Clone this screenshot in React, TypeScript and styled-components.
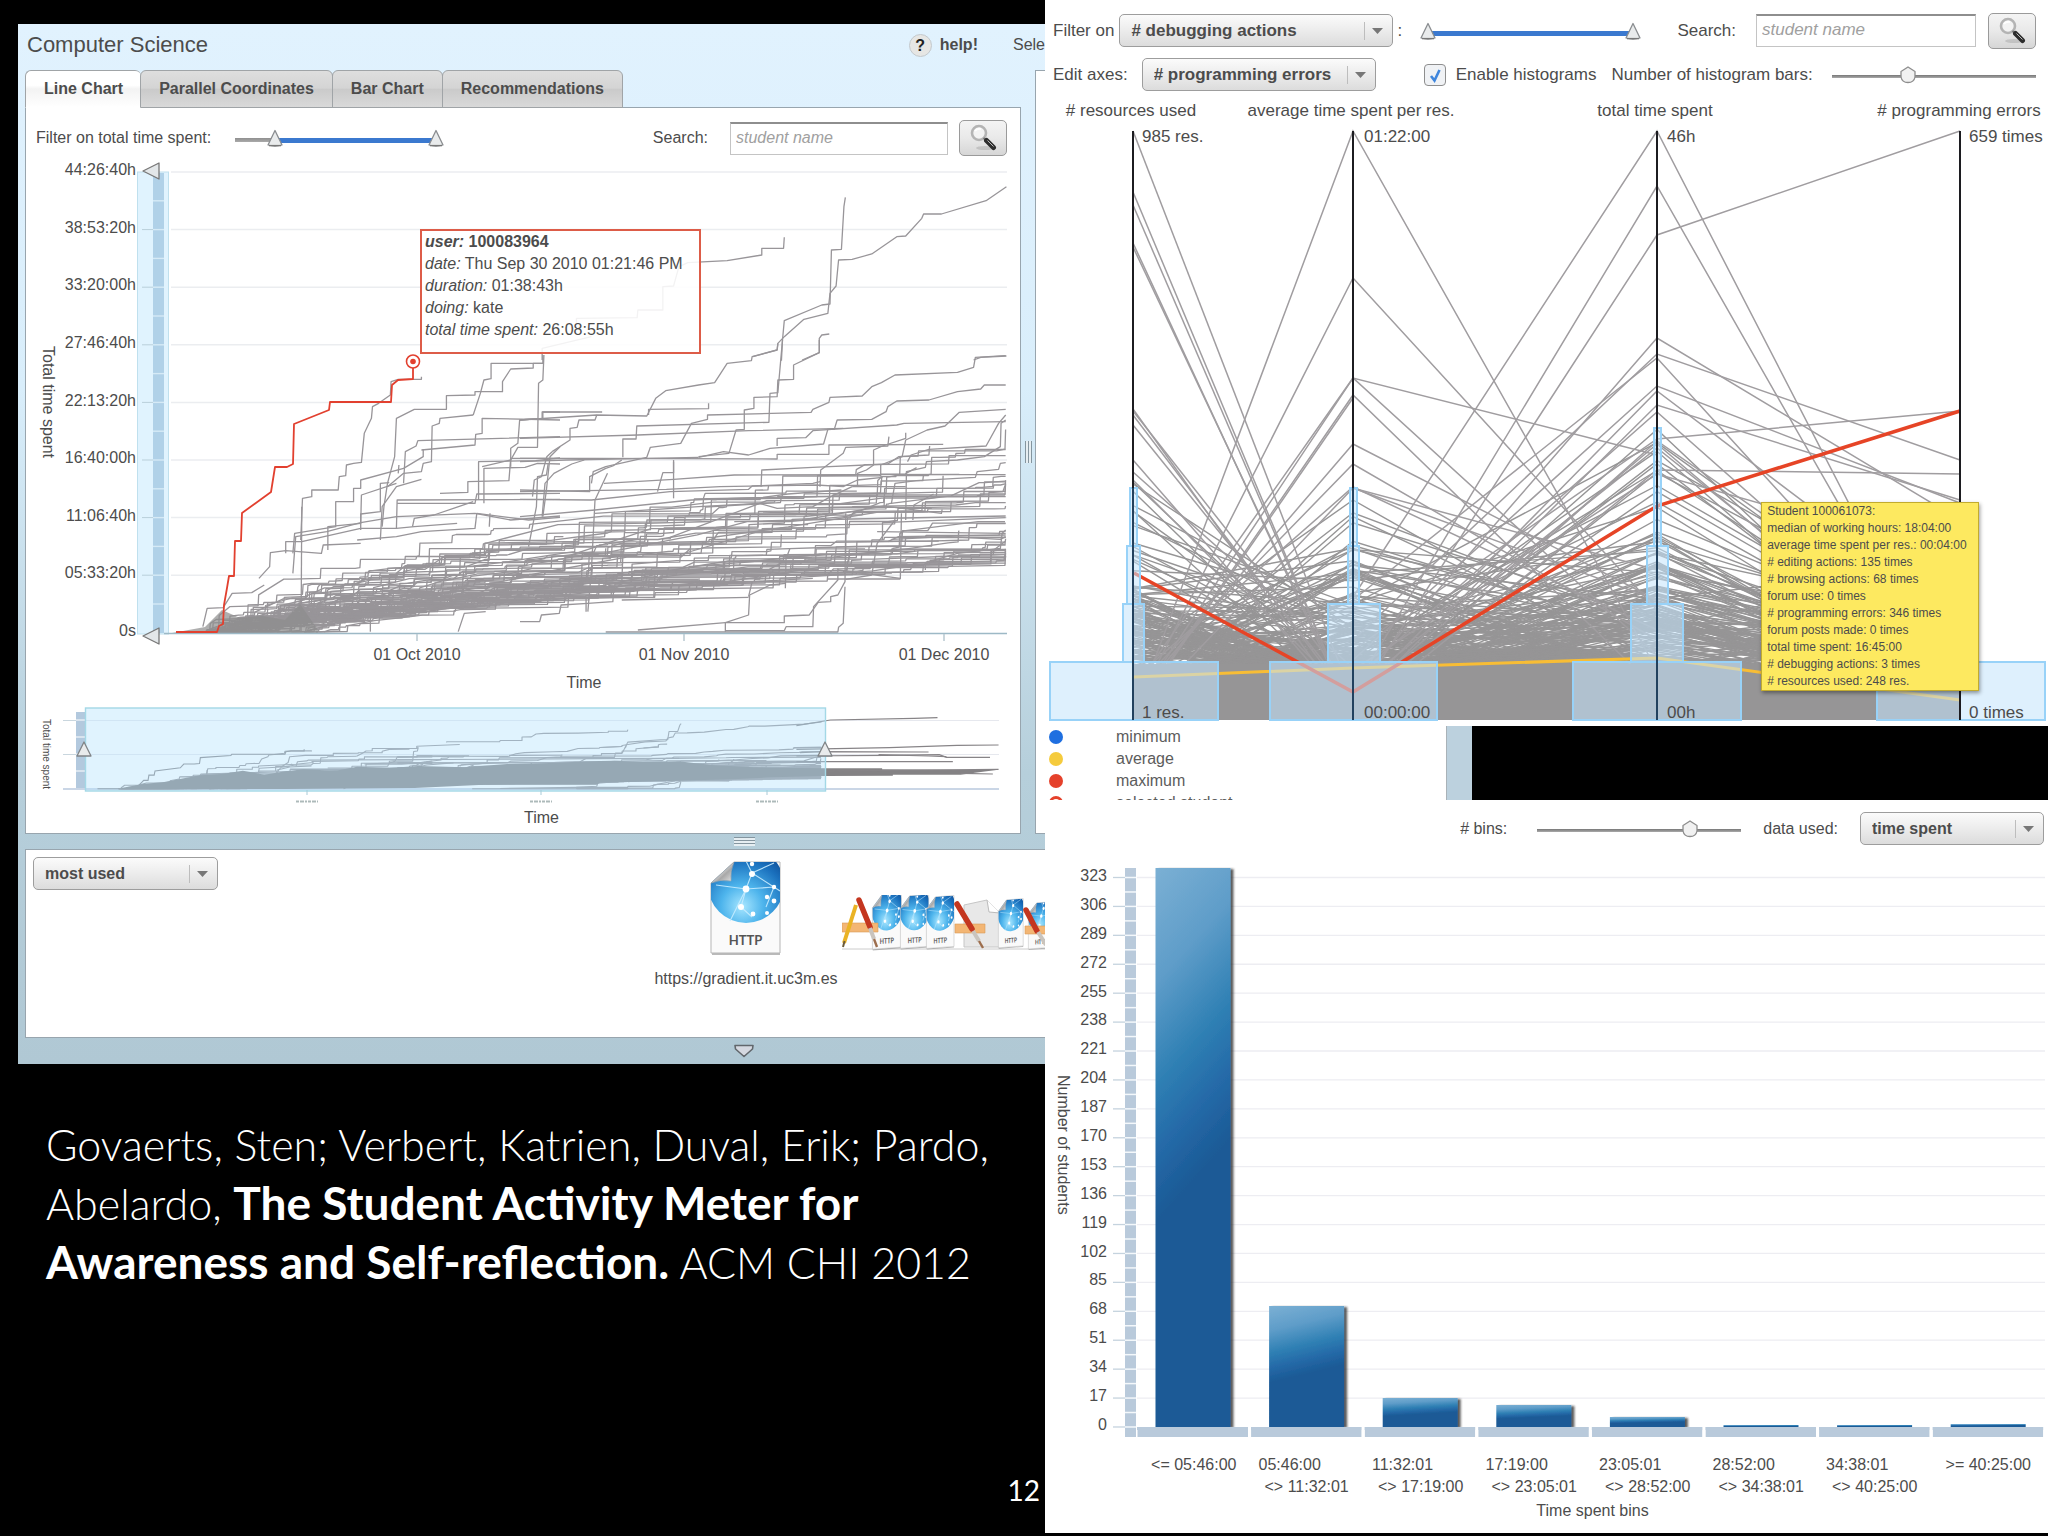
import React from "react";
import styled, { createGlobalStyle, css } from "styled-components";

const ink = "#4c4c4c";
const sans = `"Liberation Sans", Arial, Helvetica, sans-serif`;
const trace = "#989599";

const GlobalStyle = createGlobalStyle`
  * { box-sizing: border-box; }
  body { margin: 0; background: #000; color: ${ink}; font: 16px/20px ${sans}; }
  svg { display: block; }
  figure, h1, p { margin: 0; }
`;

/* ---------- data helpers ---------- */

function makeRandom(seed: number) {
  let s = seed;
  return () => {
    s = (s + 0x6d2b79f5) | 0;
    let t = Math.imul(s ^ (s >>> 15), 1 | s);
    t = (t + Math.imul(t ^ (t >>> 7), 61 | t)) ^ t;
    return ((t ^ (t >>> 14)) >>> 0) / 4294967296;
  };
}

// Cumulative work of one student: flat stretches broken by bursts.
function activityTraces(count: number) {
  const rnd = makeRandom(23);
  const out: string[] = [];
  for (let i = 0; i < count; i++) {
    const x0 = 200 + rnd() * rnd() * 130;
    const x1 = rnd() < 0.36 ? 1005 : 520 + rnd() * 440;
    const total = 72 + Math.pow(rnd(), 2) * 120;
    const power = 0.48 + rnd() * 0.5;
    let x = x0;
    let y = 632;
    const pts = [`${x.toFixed(1)},${y}`];
    while (x < x1) {
      const burst = rnd() < 0.42;
      x = Math.min(x1, x + (burst ? 2 + rnd() * 8 : 8 + rnd() * (x > 480 ? 90 : 30)));
      const goal = 632 - total * Math.pow((x - x0) / (1006 - x0), power) * (0.9 + rnd() * 0.18);
      const next = Math.min(y, goal);
      if (rnd() < 0.8) {
        pts.push(`${x.toFixed(1)},${(y - (y - next) * 0.08).toFixed(1)}`);
        pts.push(`${(x + 0.6).toFixed(1)},${next.toFixed(1)}`);
      } else {
        pts.push(`${x.toFixed(1)},${next.toFixed(1)}`);
      }
      y = next;
    }
    out.push(pts.join(" "));
  }
  return out;
}

const axes = [1133, 1353, 1657, 1960];

function studentProfiles(count: number) {
  const rnd = makeRandom(7);
  const pick = (mean: number, cap: number) => 719 - Math.min(-Math.log(1 - rnd()) * mean, cap * (0.3 + rnd() * 0.7));
  return Array.from({ length: count }, () =>
    [pick(82, 250), pick(72, 225), pick(115, 290), pick(48, 190)]
      .map((y, i) => `${axes[i]},${y.toFixed(1)}`)
      .join(" ")
  );
}

const generated = activityTraces(82);
const profiles = studentProfiles(250);

const tracesEarly = [
  "842,600 847,475 873,470 873,450 947,450 950,410 968,407 970,375 990,370 1012,367 1020,280 1040,235 1043,200 1060,190 1093,165 1095,125 1115,118 1180,118 1180,110",
  "1070,560 1075,500 1085,430 1105,350 1110,235 1160,208 1250,208 1250,167 1330,165 1330,155 1407,155 1407,125 1430,87 1493,84 1493,70 1520,70 1520,45",
  "1325,225 1345,160 1355,120 1375,116 1375,70 1520,70",
  "1350,380 1430,360 1450,322 1505,322 1508,130 1520,120 1523,45",
  "1085,440 1130,400 1180,395 1185,370 1208,365 1210,258 1230,250 1232,235 1325,225",
  "1130,430 1135,335 1165,318 1170,302 1568,290",
  "1180,330 1330,315 1332,283 1350,280 1350,235 1568,240",
  "1185,328 1185,350 1130,385 1010,420 1010,445 990,445 990,485 940,485 940,560 825,580 820,640",
  "1430,380 1430,325 1450,310 1455,240 1520,235 1520,216 1568,216",
  "1232,460 1310,457 1310,425 1425,422 1430,355 1568,355",
  "1340,480 1340,365 1500,362 1568,354",
  "1110,565 1112,480 1568,478",
  "1112,490 1330,490 1335,462 1568,460",
  "1065,600 1070,500 1110,440 1180,418",
  "1010,570 1010,522 1065,515 1065,430 1090,428",
  "1355,490 1355,385 1470,382 1505,370 1568,372",
  "918,630 918,560 1010,550 1012,465 1110,430",
  "800,640 800,605 845,605 1010,565 1110,565 1160,560 1280,550",
  "725,715 755,680 757,638 800,632 900,640 905,615 1010,610",
  "568,860 580,805 625,803 650,760 705,758 740,735",
  "1155,560 1160,535 1215,525 1325,485",
  "843,875 845,500",
  "1037,875 1037,830",
  "1283,875 1300,820 1360,815",
  "1480,620 1502,500 1505,410 1530,405 1535,370",
  "1520,530 1530,450 1540,350 1568,320",
  "1115,400 1117,375",
  "1370,560 1372,520",
  "820,700 828,590 915,575 1010,548 1110,530 1330,520 1430,540 1568,528",
  "1000,600 1110,590 1180,575 1330,565 1335,520 1480,540 1568,532",
];

const tracesLate = [
  "0,240 62,235 62,216 230,216",
  "0,240 215,225 355,228 380,175 408,152 500,135 545,128 580,70 648,62 650,50 720,30 722,10",
  "360,225 360,208 528,206 528,190",
  "0,295 330,285 640,272 905,265",
  "288,352 288,297 325,297 327,258 697,247 700,160 722,158 735,0",
  "500,350 585,340 605,270 628,268 628,210 655,205 655,172 720,170 722,120 766,118 766,75 838,38 838,0",
  "200,430 205,395 240,380 355,352 365,322 450,310 480,250 525,238 525,225 815,217 820,208 865,187 868,172 958,168 985,140 1012,128 1050,105 1225,97 1270,82 1275,52 1360,47",
  "500,352 570,335 640,345 700,325 850,312 862,268 880,268 888,240 985,238 1025,215 1030,200 1055,183 1145,180 1225,155 1290,147 1300,135 1360,135",
  "720,318 720,295 800,293 820,272 1055,255 1075,250 1360,245",
  "1010,410 1010,375 1070,350 1080,300 1140,270 1190,258 1230,217 1360,208",
  "1085,365 1095,345 1145,328 1305,318 1340,250 1360,225",
  "1080,540 1082,395 1135,382 1138,365 1225,360 1300,350 1345,320 1347,250 1360,240",
  "1040,490 1050,430 1110,422 1275,412 1280,395 1340,388 1345,370 1360,368",
  "0,355 210,355 720,357 720,343 865,343 865,315 1185,313",
  "0,365 130,360 500,352",
  "90,335 140,300 140,265 160,262 165,240 210,240 215,225",
  "62,530 70,430 95,400 145,372 180,360",
  "35,470 40,420 60,410 75,350 90,335",
  "0,450 195,455 195,410 240,385 260,378 285,360",
  "235,430 430,418 600,405 1230,403",
  "0,455 410,448 560,440 830,435 905,440 945,420 1015,412",
  "0,478 200,480 420,455 640,448 650,438 820,430 840,425",
  "0,530 210,510 480,480 680,472 750,462 900,450",
  "210,520 500,500 670,490 720,505 820,500 870,470 930,440",
  "675,440 677,390 820,382 1030,372 1060,350 1145,345 1147,318",
  "945,440 945,400 970,390 990,375 990,330 1015,318 1080,295 1080,278",
  "840,440 842,390 905,340 912,322 1030,318 1033,290",
  "720,470 1360,470",
  "930,500 1220,495 1275,488 1360,488",
  "600,545 790,540 1020,498 1180,520 1182,508",
  "1015,600 1015,548 1360,533",
  "930,440 1080,440",
  "385,455 400,398 430,398 430,360",
  "430,475 430,365",
  "912,660 912,520",
  "1100,540 1103,495 1158,462",
  "790,540 1360,528",
  "890,690 1065,715 1068,520",
  "860,717 1065,717",
  "743,745 745,650",
  "912,718 985,705 1000,610 1050,540",
  "330,870 575,848 740,848 740,828 810,825 835,787 870,785 870,770 890,765 910,725 912,560",
  "575,875 575,848 640,825 643,765 700,735 743,730",
  "640,770 650,725 820,715",
  "575,872 740,872 745,860 820,860 822,800 890,720 890,685",
  "240,876 890,876 892,862 905,850 910,740",
  "0,845 55,845 60,825 110,820 115,795 190,790 260,785 262,750 285,730 290,590",
  "190,815 200,690 210,480 245,400",
  "185,815 185,770",
  "285,780 640,772",
  "1135,690 1135,668 1225,640 1345,625 1350,580 1360,570",
  "1000,575 1360,580",
  "1040,598 1200,590 1345,598 1360,590",
  "1030,605 1060,590 1360,585",
];

const tracesHigh = [
  "1362,560 1305,602 1180,642 1130,642 1125,655 1080,708 1055,710 985,762 930,778 892,780 885,858 868,880 862,940 795,958 740,1010 722,1030 720,1050 652,1070",
  "911,592 907,620 900,748 872,750 868,912 845,915 740,962 735,1020 732,1082",
  "866,1002 845,1005 838,1015 838,1058 790,1080",
  "62,1080 62,1045 200,1010",
  "158,968 158,955 328,953 330,930 400,930 400,860 430,858 445,800 470,788 580,782 677,765 677,745 738,745 740,712",
  "1270,1080 1290,1072 1362,1068",
];

const selectedTrace =
  "176,632 217,632 219,626 223,624 224,605 227,588 229,576 234,576 235,541 241,541 242,513 271,492 275,467 287,467 293,464 294,424 329,410 330,402 391,402 392,385 398,380 413,379 413,368";

const Traces = ({ width }: { width: number }) => (
  <g fill="none" stroke={trace} strokeWidth={width} strokeLinejoin="round">
    {generated.map((p, i) => <polyline key={i} points={p} />)}
    <g transform="translate(0 340) scale(.35714 .33333)">{tracesEarly.map((p, i) => <polyline key={i} points={p} />)}</g>
    <g transform="translate(520 340) scale(.35714 .33333)">{tracesLate.map((p, i) => <polyline key={i} points={p} />)}</g>
    <g transform="translate(520 0) scale(.35714 .33333)">{tracesHigh.map((p, i) => <polyline key={i} points={p} />)}</g>
  </g>
);

/* ---------- shared controls ---------- */

const thumbImage = (body: string, w: number, h: number) =>
  `url("data:image/svg+xml,${encodeURIComponent(
    `<svg xmlns='http://www.w3.org/2000/svg' width='${w}' height='${h}' viewBox='0 0 ${w} ${h}'>${body}</svg>`
  )}")`;

const wedge = thumbImage(
  "<path d='M8 1.5 L15 16 Q8 18 1 16 Z' fill='#e9ebec' stroke='#8a8d90' stroke-width='1.3' stroke-linejoin='round'/><path d='M2 16.6 H14' stroke='#777' stroke-width='1.4'/>",
  16,
  18
);
const knob = thumbImage(
  "<path d='M8 1 L15 5.5 V11 Q14 16.5 8 16.5 Q2 16.5 1 11 V5.5 Z' fill='#f1f1f1' stroke='#8d8d8d' stroke-width='1.3' stroke-linejoin='round'/>",
  16,
  18
);
const selectArrow = thumbImage(
  "<path d='M.5 1 V19' stroke='#bdbdbd'/><path d='M8 7 H19 L13.5 13 Z' fill='#777'/>",
  22,
  20
);

const SliderBox = styled.span<{ $w: number; $from?: number }>`
  display: grid;
  flex: none;
  width: ${(p) => p.$w}px;
  height: 20px;
  padding-top: 1px;
  background: ${(p) =>
    p.$from === undefined
      ? "linear-gradient(#777, #aaa) no-repeat 0 10px / 100% 3px"
      : `linear-gradient(#3b79cf, #3b79cf) no-repeat 100% 9px / ${100 - p.$from}% 5px, linear-gradient(#8f8f8f, #aaa) no-repeat 0 9px / 100% 4px`};
  background-clip: ${(p) => (p.$from === undefined ? "border-box" : "content-box")};
  background-origin: ${(p) => (p.$from === undefined ? "border-box" : "content-box")};
  ${(p) => p.$from !== undefined && "padding-left: 8px; padding-right: 8px;"}
`;

const Range = styled.input<{ $wedge?: boolean }>`
  grid-area: 1 / 1;
  appearance: none;
  margin: 0 ${(p) => (p.$wedge ? "-8px" : "0")};
  height: 18px;
  background: none;
  pointer-events: none;
  &::-webkit-slider-thumb {
    appearance: none;
    pointer-events: auto;
    width: 16px;
    height: 18px;
    background: ${(p) => (p.$wedge ? wedge : knob)};
  }
`;

const Select = styled.select<{ $w: number }>`
  appearance: none;
  flex: none;
  width: ${(p) => p.$w}px;
  height: 33px;
  padding: 0 30px 0 11px;
  border: 1px solid #9d9d9d;
  border-radius: 5px;
  color: ${ink};
  font: bold 1em ${sans};
  background: ${selectArrow} no-repeat right 6px center, linear-gradient(#fbfbfb, #ececec 50%, #dcdcdc);
`;

const TextBox = styled.input<{ $w: number }>`
  width: ${(p) => p.$w}px;
  height: 33px;
  padding: 0 5px 2px;
  border: 1px solid #c4c4c4;
  border-top: 2px solid #8e8e8e;
  background: #fff;
  color: ${ink};
  font: 1em ${sans};
  &::placeholder { color: #a0a0a0; font-style: italic; opacity: 1; }
`;

const IconButton = styled.button`
  display: grid;
  place-items: center;
  flex: none;
  width: 48px;
  height: 36px;
  padding: 0;
  border: 1px solid #9a9a9a;
  border-radius: 5px;
  background: linear-gradient(#f4f4f4, #e9e9e9 50%, #d6d6d6);
`;

const Magnifier = () => (
  <svg width="28" height="28" viewBox="0 0 28 28" aria-hidden="true">
    <ellipse cx="16" cy="24" rx="9" ry="2" fill="#000" opacity=".12" />
    <circle cx="10" cy="9" r="7" fill="#f3f3f3" stroke="#b4b4b4" strokeWidth="2.6" />
    <path d="M6 7 Q8 4 12 5" stroke="#fff" strokeWidth="2" fill="none" />
    <path d="M14.5 14 L18 17" stroke="#777" strokeWidth="2" />
    <path d="M17.5 16.5 L24.5 23.5" stroke="#2d2d2d" strokeWidth="5" strokeLinecap="round" />
    <path d="M18.5 16.5 L24.5 22.5" stroke="#bbb" strokeWidth="1" />
  </svg>
);

/* ---------- slide frame ---------- */

const Slide = styled.main`
  display: grid;
  grid-template-columns: minmax(0, 1045fr) minmax(0, 1003fr);
  min-height: 100vh;
  overflow: hidden;
`;

const LeftColumn = styled.div`
  display: flex;
  flex-direction: column;
  padding: 24px 0 26px 18px;
`;

const RightColumn = styled.div`
  display: flex;
  flex-direction: column;
`;

const Meter = styled.section`
  padding-left: 7px;
  overflow: hidden;
  background: linear-gradient(#e1f2fe, #d9eefb 35%, #b6cfdb 72%, #b0c8d4);
`;

const MeterHeader = styled.header`
  display: flex;
  align-items: center;
  height: 46px;
  padding: 0 0 4px 2px;
  white-space: nowrap;
`;

const MeterTitle = styled.h1`
  flex: 1;
  font: 22px/26px ${sans};
`;

const HelpLink = styled.a`
  display: flex;
  align-items: center;
  gap: 8px;
  margin-right: 35px;
  color: ${ink};
  font-weight: bold;
  text-decoration: none;
`;

const HelpMark = styled.span`
  width: 23px;
  height: 23px;
  border: 1px solid #c3c9cd;
  border-radius: 50%;
  background: #e6e6e4;
  color: #222;
  text-align: center;
  line-height: 22px;
`;

const Split = styled.div`
  display: grid;
  grid-template-columns: minmax(0, 1fr) 14px 10px;
`;

const Grip = styled.div<{ $down?: boolean }>`
  align-self: center;
  justify-self: center;
  ${(p) =>
    p.$down
      ? css`width: 21px; height: 9px; background: repeating-linear-gradient(#84959f 0 1px, #e6eef2 1px 3px);`
      : css`width: 7px; height: 22px; background: repeating-linear-gradient(90deg, #84959f 0 1px, #e6eef2 1px 3px);`}
`;

const Sliver = styled.div`
  border: 1px solid #98a5ae;
  border-width: 1px 0 1px 1px;
  background: #fff;
`;

const Tabs = styled.nav`
  display: flex;
  height: 37px;
`;

const Tab = styled.button<{ $on?: boolean }>`
  height: 38px;
  padding: 0 18px;
  border: 1px solid #a0a4a7;
  border-right-width: ${(p) => (p.$on ? 0 : 1)}px;
  border-bottom-color: ${(p) => (p.$on ? "#fff" : "#a0a4a7")};
  border-radius: 6px 6px 0 0;
  position: relative;
  color: ${ink};
  font: bold 16px ${sans};
  background: ${(p) => (p.$on ? "linear-gradient(#fff, #fff 40%, #f3f3f3 50%, #fff)" : "linear-gradient(#dedede, #d4d4d4 48%, #cacaca 50%, #d9d9d9)")};
  & + & { margin-left: -1px; }
`;

const Panel = styled.div`
  padding: 12px 13px 5px 10px;
  border: 1px solid #98a5ae;
  background: #fff;
`;

const Toolbar = styled.div`
  display: flex;
  align-items: center;
  height: 36px;
`;

const Gap = styled.span<{ $w?: number }>`
  flex: ${(p) => (p.$w ? `0 0 ${p.$w}px` : "1")};
`;

const ChartRow = styled.div<{ $top: number }>`
  display: flex;
  position: relative;
  margin-top: ${(p) => p.$top}px;
`;

const SideTitle = styled.span<{ $small?: boolean; $lift?: boolean }>`
  flex: none;
  align-self: center;
  width: 24px;
  padding-bottom: ${(p) => (p.$lift ? 16 : 0)}px;
  writing-mode: vertical-rl;
  line-height: ${(p) => (p.$small ? 28 : 24)}px;
  font-size: ${(p) => (p.$small ? 10 : 16)}px;
`;

const Scale = styled.div<{ $w: number; $h: number }>`
  display: flex;
  flex: none;
  flex-direction: column;
  justify-content: space-between;
  width: ${(p) => p.$w}px;
  height: ${(p) => p.$h}px;
  text-align: right;
`;

const Plot = styled.svg<{ $h: number }>`
  flex: 1;
  min-width: 0;
  width: 100%;
  height: ${(p) => p.$h}px;
  polyline, line { vector-effect: non-scaling-stroke; }
`;

const Months = styled.div`
  display: grid;
  grid-template-columns: 220fr 120fr 147fr 120fr 140fr 120fr 3fr;
  padding-left: 101px;
  text-align: center;
  white-space: nowrap;
  & > :nth-child(1) { grid-column: 2; }
  & > :nth-child(2) { grid-column: 4; }
  & > :nth-child(3) { grid-column: 6; }
`;

const AxisTitle = styled.p<{ $left?: number; $top?: number }>`
  padding-left: ${(p) => p.$left ?? 0}px;
  margin-top: ${(p) => p.$top ?? 0}px;
  text-align: center;
`;

const UserTip = styled.div`
  position: absolute;
  left: 384px;
  top: 69px;
  width: 281px;
  height: 125px;
  padding: 0 3px;
  border: 2px solid #dd5c48;
  background: rgba(255, 255, 255, 0.88);
  line-height: 22px;
  white-space: nowrap;
`;

const SplitBar = styled.div<{ $h: number }>`
  display: grid;
  height: ${(p) => p.$h}px;
  padding-left: 41%;
  place-items: center;
`;

const Resources = styled.div`
  display: flex;
  gap: 2px;
  height: 189px;
  padding: 7px 0 0 7px;
  border: 1px solid #98a5ae;
  border-right: 0;
  background: #fff;
`;

const Resource = styled.figure`
  display: flex;
  flex-direction: column;
  align-items: center;
  gap: 12px;
  width: 188px;
  margin-left: auto;
  padding-top: 4px;
`;

const Shelf = styled.div`
  flex: none;
  width: 203px;
  padding-top: 38px;
  overflow: hidden;
`;

const Citation = styled.p`
  margin: 52px 0 0 28px;
  color: #fff;
  font: 300 43px/58px Lato, sans-serif;
  white-space: nowrap;
  b { font-size: 46px; font-weight: 700; }
`;

const PageNumber = styled.span`
  margin: auto 5px 0 0;
  align-self: flex-end;
  color: #fff;
  font: 400 28px/40px Lato, sans-serif;
`;

/* ---------- right side ---------- */

const Profiles = styled.section`
  padding-top: 12px;
  background: #fff;
  font-size: 17px;
  white-space: nowrap;
`;

const ControlRow = styled.div<{ $h: number }>`
  display: flex;
  align-items: center;
  height: ${(p) => p.$h}px;
  padding: 0 12px 0 8px;
`;

const Check = styled.input`
  appearance: none;
  width: 22px;
  height: 22px;
  margin: 0 10px 0 0;
  border: 1px solid #8e8e8e;
  border-radius: 4px;
  background: ${thumbImage("<path d='M6 11 L9.5 15.5 L14.5 5' fill='none' stroke='#3f86dd' stroke-width='2.6'/>", 20, 20)} center no-repeat, #f0f2f5;
`;

const AxisNames = styled.div`
  display: grid;
  grid-template-columns: 172fr 268fr 340fr 45fr 178fr;
  margin-top: 1px;
  text-align: center;
  & > :nth-child(4) { grid-column: 5; }
`;

const ProfileChart = styled.div`
  display: grid;
  position: relative;
  margin-top: 3px;
`;

const ProfilePlot = styled(Plot)`
  grid-area: 1 / 1;
`;

const Limits = styled.div`
  display: grid;
  grid-area: 1 / 1;
  grid-template-columns: 97fr 222fr 303fr 302fr 79fr;
  align-content: space-between;
  padding: 3px 0;
  & > :nth-child(4n + 1) { grid-column: 2; }
`;

const StudentTip = styled.div`
  position: absolute;
  left: 71.4%;
  top: 378px;
  width: 218px;
  padding: 0 5px;
  border: 1px solid #c2ab2e;
  background: #fde960;
  box-shadow: 1px 2px 4px rgba(0, 0, 0, 0.4);
  font-size: 12px;
  line-height: 17px;
`;

const LegendStrip = styled.div`
  display: grid;
  grid-template-columns: minmax(0, 401fr) 26px minmax(0, 576fr);
  height: 74px;
  overflow: hidden;
`;

const Legend = styled.ul`
  height: 74px;
  margin: 0;
  padding: 0 0 0 4px;
  overflow: hidden;
  background: #fff;
  list-style: none;
  line-height: 22px;
  color: #5c5c5c;
`;

const LegendItem = styled.li`
  display: flex;
  align-items: center;
  gap: 53px;
`;

const Dot = styled.span<{ $c: string; $ring?: boolean }>`
  width: 14px;
  height: 14px;
  border-radius: 50%;
  ${(p) => (p.$ring ? `border: 3px solid ${p.$c};` : `background: ${p.$c};`)}
`;

const WindowEdge = styled.div`
  border-left: 1px solid #a9b2b8;
  background: #bcd1de;
`;

const Bins = styled.section`
  padding: 12px 0;
  background: #fff;
`;

const BinControls = styled.div`
  display: flex;
  align-items: center;
  justify-content: flex-end;
  padding-right: 4px;
`;

const BinRow = styled.div`
  display: flex;
  margin-top: 20px;
  padding-left: 6px;
`;

const BinScale = styled(Scale)`
  margin: 1px 6px 0 0;
`;

const BinLabels = styled.div`
  display: grid;
  grid-template-columns: repeat(8, 1fr);
  margin: 13px 3px 0 92px;
  line-height: 22px;
  white-space: nowrap;
`;

const BinLabel = styled.div<{ $mid?: boolean }>`
  padding-left: ${(p) => (p.$mid ? 0 : 8)}px;
  text-align: ${(p) => (p.$mid ? "center" : "left")};
  span { display: block; padding-left: 6px; }
`;

/* ---------- drawings ---------- */

const LeftWedge = ({ y }: { y: number }) => (
  <path d={`M143 ${y} L159 ${y - 8} V${y + 8} Z`} fill="#e3e7e9" stroke="#777" strokeWidth="1.3" strokeLinejoin="round" />
);

const UpWedge = ({ x }: { x: number }) => (
  <path d={`M${x} 742 L${x + 7} 756 H${x - 7} Z`} fill="#e9ebec" stroke="#808487" strokeWidth="1.3" strokeLinejoin="round" />
);

const LineChart = () => (
  <Plot $h={485} viewBox="137 160 870 485" preserveAspectRatio="none" role="img" aria-label="Total time spent per student">
    {Array.from({ length: 8 }, (_, i) => (
      <line key={i} x1="171" x2="1007" y1={172 + i * 57.6} y2={172 + i * 57.6} stroke="#ebedf0" strokeWidth="1.5" />
    ))}
    <rect x="137.5" y="172" width="31" height="462" fill="#e0f3fe" stroke="#bfe0ee" />
    <rect x="153" y="173" width="11" height="460" fill="#b0d1e8" />
    {Array.from({ length: 15 }, (_, i) => (
      <line key={i} x1="153" x2="164" y1={200.8 + i * 28.8} y2={200.8 + i * 28.8} stroke="#d6eaf6" strokeWidth="1.4" />
    ))}
    {Array.from({ length: 7 }, (_, i) => (
      <line key={i} x1="142" x2="153" y1={229.6 + i * 57.6} y2={229.6 + i * 57.6} stroke="#b9cfda" />
    ))}
    <Traces width={1.3} />
    <path d="M172 633 L205 627 L222 610 L240 618 L262 616 L285 620 L300 604 L318 630 L318 633 Z" fill="#8d8d8d" opacity=".7" />
    <line x1="164" x2="1007" y1="633.5" y2="633.5" stroke="#9db9c6" strokeWidth="1.5" />
    {[417, 684, 944].map((x) => <line key={x} x1={x} x2={x} y1="634" y2="641" stroke="#b9c8d0" strokeWidth="1.5" />)}
    <polyline fill="none" stroke="#e2402f" strokeWidth="1.8" strokeLinejoin="round" points={selectedTrace} />
    <circle cx="413" cy="361.5" r="6.5" fill="#fff" stroke="#e2402f" strokeWidth="1.6" />
    <circle cx="413" cy="361.5" r="2.8" fill="#e2402f" />
    <LeftWedge y={171} />
    <LeftWedge y={636} />
  </Plot>
);

const Overview = () => (
  <Plot $h={108} viewBox="60 700 947 108" preserveAspectRatio="none" role="img" aria-label="Overview of total time spent">
    {[720.5, 754.5].map((y) => (
      <g key={y}>
        <line x1="85" x2="999" y1={y} y2={y} stroke="#e6e8ee" />
        <line x1="63" x2="76" y1={y} y2={y} stroke="#c9d6de" />
      </g>
    ))}
    <rect x="76" y="712" width="9" height="76" fill="#b3c9de" />
    {[720, 737, 754, 771].map((y) => <line key={y} x1="76" x2="85" y1={y} y2={y} stroke="#fff" />)}
    <line x1="63" x2="999" y1="789" y2="789" stroke="#b9c9de" strokeWidth="1.5" />
    <g transform="translate(-56 694) scale(.872 .15)">
      <Traces width={1.1} />
      <polyline fill="none" stroke="#878487" strokeWidth="1.1" points={selectedTrace} />
    </g>
    <g transform="translate(0 680) scale(.35714 .33333)">
      <path
        d="M340 324 400 312 460 306 500 298 560 286 620 282 680 272 740 284 800 274 850 268 940 272 1000 260 1090 264 1170 258 1300 262 1420 252 1568 248 1640 244 1720 242 1800 246 1900 244 2000 256 2110 262 2230 264 2310 265 2470 265 2470 268 2790 270 2730 278 2690 284 2500 284 2500 287 2310 288 2160 292 2050 298 1890 302 1680 308 1670 314 1500 314 1340 315 1160 324 800 327 340 327 Z"
        fill="#848284"
      />
      <g fill="none" stroke="#878487" strokeWidth="1.2">
        <polyline points="2230,137 2325,120 2560,115 2625,113" />
        <polyline points="2230,208 2490,203 2680,196 2796,195" />
        <polyline points="2240,218 2300,215 2600,216" />
        <polyline points="2230,228 2480,226 2630,224 2650,232 2772,232" />
        <polyline points="2230,245 2668,245" />
        <polyline points="2460,224 2600,228 2650,230" />
        <polyline points="2310,273 2796,268" />
        <polyline points="2690,280 2780,282" />
      </g>
    </g>
    <rect x="85.5" y="708" width="740" height="83" fill="#b1e1fc" fillOpacity=".4" stroke="#a3d8e6" strokeWidth="1.4" />
    {[307, 541, 767].map((x) => (
      <g key={x} stroke="#9aa">
        <line x1={x} x2={x} y1="790" y2="795" stroke="#a8cbd8" />
        <line x1={x - 11} x2={x + 11} y1="801.5" y2="801.5" strokeWidth="2" strokeDasharray="3 1 4 1 2 1" opacity=".8" />
      </g>
    ))}
    <UpWedge x={84} />
    <UpWedge x={825} />
  </Plot>
);

const bar = (x: number, y: number, w: number, h: number) => ({ x, y, width: w, height: h });

const histogram = [
  bar(1050, 662, 168, 58), bar(1123, 604, 21, 58), bar(1127, 546, 13, 58), bar(1130, 488, 7, 58),
  bar(1270, 662, 167, 58), bar(1328, 604, 52, 58), bar(1348, 546, 11, 58), bar(1350, 488, 7, 58),
  bar(1573, 662, 168, 58), bar(1631, 604, 52, 58), bar(1647, 546, 21, 58), bar(1654, 428, 7, 118),
  bar(1877, 662, 168, 58),
];

const outliers = [
  "1133,131 1353,699", "1133,192 1353,716", "1133,205 1353,715", "1133,243 1353,717", "1133,247 1353,712",
  "1133,409 1353,716", "1133,411 1353,690", "1133,415 1353,704", "1133,425 1353,698", "1133,460 1353,712",
  "1133,472 1353,668", "1133,480 1353,700",
  "1133,717 1353,131 1657,670", "1133,712 1353,278 1657,610", "1133,708 1353,378 1657,455", "1133,690 1353,378 1657,655",
  "1133,714 1353,395 1657,690", "1133,716 1353,398", "1133,700 1353,444 1657,600", "1133,690 1353,464 1657,640",
  "1133,718 1353,488 1657,570", "1133,680 1353,487 1657,630", "1353,488 1657,600",
  "1353,597 1657,131 1960,719", "1353,691 1657,186 1960,716", "1353,703 1657,235 1960,131",
  "1353,688 1657,338 1960,520", "1353,640 1657,354 1960,460", "1353,600 1657,358 1960,690",
  "1353,660 1657,386 1960,503", "1353,700 1657,391 1960,620", "1353,706 1657,405 1960,500", "1353,680 1657,412 1960,680",
  "1353,650 1657,439 1960,411", "1353,712 1657,441 1960,650", "1353,700 1657,444 1960,700", "1353,715 1657,470 1960,474",
  "1353,690 1657,448 1960,690", "1353,670 1657,474 1960,560",
];

const ParallelPlot = () => (
  <ProfilePlot $h={602} viewBox="1045 124 1003 602" preserveAspectRatio="none" role="img" aria-label="Parallel coordinates of student activity">
    <path d="M1133 680 L1190 668 1270 648 1320 652 1353 655 1400 660 1530 645 1657 655 1760 664 1860 680 1960 690 V720 H1133 Z" fill="#969596" />
    <g fill="none" stroke="#969596" strokeWidth="1.4">
      {profiles.map((p, i) => <polyline key={i} points={p} />)}
    </g>
    <g fill="none" stroke="#a09da0" strokeWidth="1.5">
      {outliers.map((p) => <polyline key={p} points={p} />)}
    </g>
    <rect x="1133" y="664" width="827" height="56" fill="#969596" />
    <polyline points="1134,677 1353,668 1657,658 1960,700" fill="none" stroke="#f8bd35" strokeWidth="3" />
    <polyline points="1134,573 1353,692 1657,506 1960,411" fill="none" stroke="#e64426" strokeWidth="3.5" />
    <g fill="#c4e4fc" fillOpacity=".56" stroke="#98d2f8" strokeWidth="2">
      {histogram.map((r, i) => <rect key={i} {...r} />)}
    </g>
    {axes.map((x) => <line key={x} x1={x} x2={x} y1="131" y2="488" stroke="#1c1c20" strokeWidth="2" />)}
    {axes.map((x) => <line key={x} x1={x} x2={x} y1="488" y2="720" stroke={x < 1960 ? "#22415e" : "#1c1c20"} strokeWidth="2" />)}
  </ProfilePlot>
);

const binTops = [868, 1306, 1398, 1405, 1417, 1425, 1425, 1424];

const BinPlot = () => (
  <Plot $h={576} viewBox="1113 865 935 576" preserveAspectRatio="none" role="img" aria-label="Number of students per time bin">
    <defs>
      <linearGradient id="bar" x1="0" y1="0" x2=".15" y2="1">
        <stop offset="0" stopColor="#7bb0d4" />
        <stop offset=".2" stopColor="#5f9dc9" />
        <stop offset=".38" stopColor="#2f80b4" />
        <stop offset=".5" stopColor="#256aa8" />
        <stop offset=".62" stopColor="#1b5a96" />
      </linearGradient>
      <filter id="shade" x="-10%" y="-10%" width="130%" height="120%">
        <feDropShadow dx="3" dy="1" stdDeviation="1.2" floodColor="#222" floodOpacity=".75" />
      </filter>
    </defs>
    {Array.from({ length: 20 }, (_, i) => {
      const y = 877.5 + i * 28.92;
      return (
        <g key={i}>
          <line x1="1113" x2="1125" y1={y} y2={y} stroke="#c5d3de" strokeWidth="1.3" />
          {i < 19 && <line x1="1137" x2="2045" y1={y} y2={y} stroke="#ededf2" strokeWidth="1.3" />}
        </g>
      );
    })}
    <rect x="1125" y="868" width="11" height="569" fill="#b9cadb" />
    {Array.from({ length: 39 }, (_, i) => (
      <line key={i} x1="1125" x2="1136" y1={877.5 + i * 14.46} y2={877.5 + i * 14.46} stroke="#f4f8fb" strokeWidth="1.5" />
    ))}
    {binTops.map((top, i) => (
      <g key={i}>
        <rect x={1137.5 + i * 113.6} y="1427" width="110.6" height="10" fill="#b9cadb" />
        <rect x={1155.5 + i * 113.6} y={top} width="75" height={1427 - top} fill="url(#bar)" filter={top < 1423 ? "url(#shade)" : undefined} />
      </g>
    ))}
    <rect x="1137" y="1427" width="908" height="3" fill="#b9cadb" />
    {binTops.map((_, i) => <rect key={i} x={1248 + i * 113.6} y="1427" width="3" height="10" fill="#fff" />)}
  </Plot>
);

const HttpPage = ({ uid }: { uid: string }) => (
  <g>
    <defs>
      <radialGradient id={`globe${uid}`} cx=".45" cy=".78" r=".8">
        <stop offset="0" stopColor="#a7e6ff" />
        <stop offset=".35" stopColor="#4db4ec" />
        <stop offset=".75" stopColor="#1a70bd" />
        <stop offset="1" stopColor="#0d4a94" />
      </radialGradient>
      <linearGradient id={`curl${uid}`} x1="0" y1="0" x2="1" y2="1">
        <stop offset=".3" stopColor="#fff" />
        <stop offset=".6" stopColor="#a8a8a8" />
        <stop offset="1" stopColor="#efefef" />
      </linearGradient>
      <clipPath id={`page${uid}`}><path d="M24 1 H70 V91 H1 V22 Z" /></clipPath>
    </defs>
    <path d="M2 93 H70" stroke="#777" strokeWidth="2" opacity=".5" />
    <path d="M24 1 H70 V92 H1 V22 Z" fill="#fafafa" stroke="#b5b5b5" />
    <g clipPath={`url(#page${uid})`}>
      <circle cx="36" cy="24" r="38" fill={`url(#globe${uid})`} />
      <path d="M36 28 L42 12 L64 2 M36 28 L20 60 M36 28 L6 24 M36 28 L64 26 M36 28 L31 46 L42 56 M42 12 L70 30 M42 12 L36 0 M64 26 L56 46" stroke="#c6ecff" strokeWidth="1.1" fill="none" opacity=".9" />
      {[[36, 28, 3.4], [42, 13, 3], [31, 46, 3], [64, 26, 2.2], [57, 36, 2.2], [64, 40, 2.4], [43, 53, 2.4], [57, 52, 2], [42, 3, 2.2]].map(([x, y, r]) => (
        <circle key={`${x}-${y}`} cx={x} cy={y} r={r} fill="#fff" />
      ))}
    </g>
    <path d="M24 1 Q20 10 21 20 Q10 18 1 22 Z" fill={`url(#curl${uid})`} stroke="#aaa" strokeWidth=".6" />
    <text x="35.5" y="84" textAnchor="middle" fontFamily="Lato, sans-serif" fontWeight="700" fontSize="13" fill="#555">HTTP</text>
  </g>
);

const Tools = () => (
  <g>
    <path d="M0 26 H36 V35 H0 Z" fill="#f3b674" stroke="#d99a58" strokeWidth=".6" />
    <path d="M14 8 L2 46" stroke="#eab325" strokeWidth="4" />
    <path d="M2.6 44 L1 50" stroke="#6b5a3a" strokeWidth="2" />
    <path d="M17 3 L28 30" stroke="#c4361f" strokeWidth="5.5" strokeLinecap="round" />
    <path d="M28 31 L32 42" stroke="#c9c4be" strokeWidth="4" />
    <path d="M32 42 L35 50" stroke="#9d6e4d" strokeWidth="2.4" />
  </g>
);

const ShelfDrawing = () => (
  <svg width="206" height="62" viewBox="0 0 206 62" aria-hidden="true">
    <path d="M0 54 H206" stroke="#ccc" />
    <g transform="translate(30 0) scale(.42 .59) skewY(-3)"><HttpPage uid="a" /></g>
    <g transform="translate(58 1) scale(.41 .57) skewY(-3)"><HttpPage uid="b" /></g>
    <g transform="translate(84 2) scale(.4 .56) skewY(-3)"><HttpPage uid="c" /></g>
    <g transform="translate(0 2)"><Tools /></g>
    <path d="M122 10 L145 5 L158 18 V52 H122 Z" fill="#e8e8e8" stroke="#c6c6c6" />
    <path d="M145 5 L147 17 L158 18" fill="#fff" stroke="#bbb" />
    <path d="M113 29 H143 V38 H113 Z" fill="#f3b674" stroke="#d99a58" strokeWidth=".6" />
    <path d="M115 9 L130 34" stroke="#c4361f" strokeWidth="5.5" strokeLinecap="round" />
    <path d="M131 36 L137 46" stroke="#c9c4be" strokeWidth="4" />
    <path d="M137 46 L141 53" stroke="#9d6e4d" strokeWidth="2.4" />
    <g transform="translate(156 5) scale(.36 .52) skewY(-3)"><HttpPage uid="d" /></g>
    <g transform="translate(186 8) scale(.37 .5) skewY(-3)"><HttpPage uid="e" /></g>
    <path d="M183 31 H206 V39 H183 Z" fill="#f3b674" stroke="#d99a58" strokeWidth=".6" />
    <path d="M184 15 L195 36" stroke="#c4361f" strokeWidth="5.5" strokeLinecap="round" />
    <path d="M196 37 L204 50" stroke="#c9c4be" strokeWidth="4" />
  </svg>
);

/* ---------- page ---------- */

const hours = ["44:26:40h", "38:53:20h", "33:20:00h", "27:46:40h", "22:13:20h", "16:40:00h", "11:06:40h", "05:33:20h", "0s"];
const counts = Array.from({ length: 20 }, (_, i) => 323 - i * 17);
const bins: [string, string?][] = [
  ["<= 05:46:00"], ["05:46:00", "<> 11:32:01"], ["11:32:01", "<> 17:19:00"], ["17:19:00", "<> 23:05:01"],
  ["23:05:01", "<> 28:52:00"], ["28:52:00", "<> 34:38:01"], ["34:38:01", "<> 40:25:00"], [">= 40:25:00"],
];
const studentFacts = [
  "Student 100061073:", "median of working hours: 18:04:00", "average time spent per res.: 00:04:00",
  "# editing actions: 135 times", "# browsing actions: 68 times", "forum use: 0 times",
  "# programming errors: 346 times", "forum posts made: 0 times", "total time spent: 16:45:00",
  "# debugging actions: 3 times", "# resources used: 248 res.",
];

export default function App() {
  return (
    <Slide>
      <GlobalStyle />
      <LeftColumn>
        <Meter>
          <MeterHeader>
            <MeterTitle>Computer Science</MeterTitle>
            <HelpLink href="#help"><HelpMark>?</HelpMark>help!</HelpLink>
            <span>Sele</span>
          </MeterHeader>
          <Split>
            <div>
              <Tabs>
                <Tab $on>Line Chart</Tab>
                <Tab>Parallel Coordinates</Tab>
                <Tab>Bar Chart</Tab>
                <Tab>Recommendations</Tab>
              </Tabs>
              <Panel>
                <Toolbar>
                  <label htmlFor="time-from">Filter on total time spent:</label>
                  <Gap $w={16} />
                  <SliderBox $w={217} $from={20}>
                    <Range $wedge id="time-from" type="range" defaultValue={20} />
                    <Range $wedge type="range" aria-label="Upper time limit" defaultValue={100} />
                  </SliderBox>
                  <Gap />
                  <label htmlFor="search-line">Search:</label>
                  <Gap $w={22} />
                  <TextBox id="search-line" placeholder="student name" $w={218} />
                  <Gap $w={11} />
                  <IconButton aria-label="Search student"><Magnifier /></IconButton>
                </Toolbar>
                <ChartRow $top={4}>
                  <SideTitle>Total time spent</SideTitle>
                  <Scale $w={76} $h={481}>{hours.map((h) => <span key={h}>{h}</span>)}</Scale>
                  <Gap $w={1} />
                  <LineChart />
                  <UserTip>
                    <b><i>user:</i> 100083964</b><br />
                    <i>date:</i> Thu Sep 30 2010 01:21:46 PM<br />
                    <i>duration:</i> 01:38:43h<br />
                    <i>doing:</i> kate<br />
                    <i>total time spent:</i> 26:08:55h
                  </UserTip>
                </ChartRow>
                <Months><span>01 Oct 2010</span><span>01 Nov 2010</span><span>01 Dec 2010</span></Months>
                <AxisTitle $left={125} $top={8}>Time</AxisTitle>
                <ChartRow $top={7}>
                  <SideTitle $small>Total time spent</SideTitle>
                  <Overview />
                </ChartRow>
                <AxisTitle $left={40}>Time</AxisTitle>
              </Panel>
            </div>
            <Grip />
            <Sliver />
          </Split>
          <SplitBar $h={15}><Grip $down /></SplitBar>
          <Resources>
            <Select $w={185} aria-label="Resource order"><option>most used</option></Select>
            <Resource>
              <svg width="72" height="96" viewBox="0 0 72 96" aria-hidden="true"><HttpPage uid="main" /></svg>
              <figcaption>https://gradient.it.uc3m.es</figcaption>
            </Resource>
            <Shelf><ShelfDrawing /></Shelf>
          </Resources>
          <SplitBar $h={26}>
            <svg width="22" height="14" viewBox="0 0 22 14" aria-hidden="true">
              <path d="M2 1.5 H20 L19.5 5 L11 12.5 L2.5 5 Z" fill="#d5d8e0" stroke="#62676c" strokeWidth="1.6" strokeLinejoin="round" />
            </svg>
          </SplitBar>
        </Meter>
        <Citation>
          Govaerts, Sten; Verbert, Katrien, Duval, Erik; Pardo,<br />
          Abelardo, <b>The Student Activity Meter for</b><br />
          <b>Awareness and Self-reflection.</b> ACM CHI 2012
        </Citation>
        <PageNumber>12</PageNumber>
      </LeftColumn>

      <RightColumn>
        <Profiles>
          <ControlRow $h={37}>
            <label htmlFor="filter-on">Filter on</label>
            <Gap $w={5} />
            <Select id="filter-on" $w={274}><option># debugging actions</option></Select>
            <Gap $w={4} />:<Gap $w={18} />
            <SliderBox $w={221} $from={0}>
              <Range $wedge type="range" aria-label="Lower limit" defaultValue={0} />
              <Range $wedge type="range" aria-label="Upper limit" defaultValue={100} />
            </SliderBox>
            <Gap />
            <label htmlFor="search-profiles">Search:</label>
            <Gap $w={20} />
            <TextBox id="search-profiles" placeholder="student name" $w={220} />
            <Gap $w={12} />
            <IconButton aria-label="Search student"><Magnifier /></IconButton>
          </ControlRow>
          <ControlRow $h={51}>
            <label htmlFor="edit-axes">Edit axes:</label>
            <Gap $w={14} />
            <Select id="edit-axes" $w={234}><option># programming errors</option></Select>
            <Gap $w={48} />
            <Check id="histograms" type="checkbox" defaultChecked />
            <label htmlFor="histograms">Enable histograms</label>
            <Gap $w={15} />
            <label htmlFor="bar-count">Number of histogram bars:</label>
            <Gap />
            <SliderBox $w={204}><Range id="bar-count" type="range" defaultValue={36} /></SliderBox>
          </ControlRow>
          <AxisNames>
            <span># resources used</span>
            <span>average time spent per res.</span>
            <span>total time spent</span>
            <span># programming errors</span>
          </AxisNames>
          <ProfileChart>
            <ParallelPlot />
            <Limits>
              {["985 res.", "01:22:00", "46h", "659 times", "1 res.", "00:00:00", "00h", "0 times"].map((t) => <span key={t}>{t}</span>)}
            </Limits>
            <StudentTip>{studentFacts.map((t) => <div key={t}>{t}</div>)}</StudentTip>
          </ProfileChart>
        </Profiles>
        <LegendStrip>
          <Legend>
            <LegendItem><Dot $c="#1f6fe0" />minimum</LegendItem>
            <LegendItem><Dot $c="#f5cb3d" />average</LegendItem>
            <LegendItem><Dot $c="#e5412b" />maximum</LegendItem>
            <LegendItem><Dot $c="#e5412b" $ring />selected student</LegendItem>
          </Legend>
          <WindowEdge />
        </LegendStrip>
        <Bins>
          <BinControls>
            <label htmlFor="bin-count"># bins:</label>
            <Gap $w={30} />
            <SliderBox $w={204}><Range id="bin-count" type="range" defaultValue={77} /></SliderBox>
            <Gap $w={22} />
            <label htmlFor="bin-data">data used:</label>
            <Gap $w={22} />
            <Select id="bin-data" $w={184}><option>time spent</option></Select>
          </BinControls>
          <BinRow>
            <SideTitle $lift>Number of students</SideTitle>
            <BinScale $w={32} $h={569}>{counts.map((c) => <span key={c}>{c}</span>)}</BinScale>
            <BinPlot />
          </BinRow>
          <BinLabels>
            {bins.map(([a, b]) => <BinLabel key={a} $mid={!b}>{a}{b && <span>{b}</span>}</BinLabel>)}
          </BinLabels>
          <AxisTitle $left={92} $top={3}>Time spent bins</AxisTitle>
        </Bins>
      </RightColumn>
    </Slide>
  );
}
